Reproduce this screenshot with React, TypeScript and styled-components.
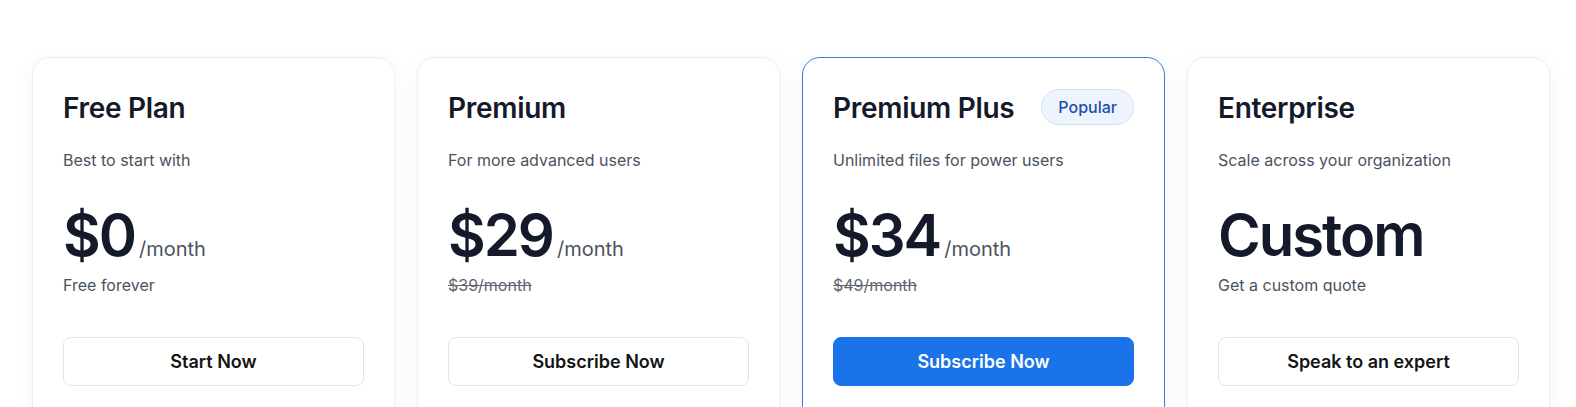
import React from 'react';
import styled, { createGlobalStyle } from 'styled-components';

type Plan = {
   name: string;
   tagline: string;
   price: string;
   period?: string;
   oldPrice?: string;
   note?: string;
   cta: string;
   featured?: boolean;
   badge?: string;
};

const plans: Plan[] = [
   { name: 'Free Plan', tagline: 'Best to start with', price: '$0', period: '/month', note: 'Free forever', cta: 'Start Now' },
   { name: 'Premium', tagline: 'For more advanced users', price: '$29', period: '/month', oldPrice: '$39/month', cta: 'Subscribe Now' },
   {
      name: 'Premium Plus',
      tagline: 'Unlimited files for power users',
      price: '$34',
      period: '/month',
      oldPrice: '$49/month',
      cta: 'Subscribe Now',
      featured: true,
      badge: 'Popular'
   },
   { name: 'Enterprise', tagline: 'Scale across your organization', price: 'Custom', note: 'Get a custom quote', cta: 'Speak to an expert' }
];

const GlobalStyle = createGlobalStyle`
   html, body {
      margin: 0;
      padding: 0;
      background: #ffffff;
      overflow: hidden;
      font-family: Inter, "Noto Sans", sans-serif;
      -webkit-font-smoothing: antialiased;
   }
`;

const App: React.FC = (): JSX.Element => {
   return (
      <>
         <GlobalStyle />
         <Page>
            <CardGrid>
               {plans.map((plan, i) => (
                  <Card key={i} featured={plan.featured}>
                     <TitleRow>
                        <PlanName>{plan.name}</PlanName>
                        {plan.badge && <Badge>{plan.badge}</Badge>}
                     </TitleRow>
                     <Tagline>{plan.tagline}</Tagline>
                     <PriceRow>
                        <Price>{plan.price}</Price>
                        {plan.period && <Period>{plan.period}</Period>}
                     </PriceRow>
                     {plan.oldPrice ? <OldPrice>{plan.oldPrice}</OldPrice> : <Note>{plan.note}</Note>}
                     <ActionButton primary={plan.featured}>{plan.cta}</ActionButton>
                  </Card>
               ))}
            </CardGrid>
         </Page>
      </>
   );
};

const Page = styled.div`
   padding: 57px 0 0 32px;
   height: 407px;
   box-sizing: border-box;
   overflow: hidden;
`;

const CardGrid = styled.div`
   display: grid;
   grid-template-columns: repeat(4, 363px);
   gap: 22px;
`;

const Card = styled.div<{ featured?: boolean }>`
   box-sizing: border-box;
   display: flex;
   flex-direction: column;
   padding: 32px 30px 40px;
   border-radius: 18px;
   background: #ffffff;
   border: ${({ featured }) => (featured ? '1.5px solid #3b7ad9' : '1px solid #efefef')};
   box-shadow: 0 4px 22px rgba(0, 0, 0, 0.045);
`;

const TitleRow = styled.div`
   display: flex;
   align-items: center;
   justify-content: space-between;
   height: 36px;
`;

const PlanName = styled.h3`
   margin: 0;
   font-size: 28px;
   line-height: 36px;
   font-weight: 600;
   letter-spacing: -0.3px;
   color: #141a29;
`;

const Badge = styled.span`
   display: inline-flex;
   align-items: center;
   box-sizing: border-box;
   height: 36px;
   margin-top: -2px;
   padding: 0 16px;
   border-radius: 18px;
   background: #eef4fd;
   border: 1px solid #d3e0f3;
   color: #1f4fae;
   font-size: 16px;
   font-weight: 500;
`;

const Tagline = styled.p`
   margin: 22px 0 0;
   font-size: 16px;
   line-height: 24px;
   color: #4b5260;
`;

const PriceRow = styled.div`
   display: flex;
   align-items: baseline;
   gap: 4px;
   margin-top: 31px;
   height: 64px;
`;

const Price = styled.span`
   font-size: 58px;
   line-height: 64px;
   font-weight: 600;
   letter-spacing: -2px;
   color: #141a29;
`;

const Period = styled.span`
   font-size: 20px;
   color: #4b5260;
`;

const Note = styled.p`
   margin: 6px 0 0;
   font-size: 16px;
   line-height: 24px;
   color: #4b5260;
`;

const OldPrice = styled(Note)`
   color: #5f6570;
   text-decoration: line-through;
`;

const ActionButton = styled.button.attrs({ type: 'button' })<{ primary?: boolean }>`
   margin-top: 40px;
   height: 49px;
   width: 100%;
   border-radius: 8px;
   font-family: inherit;
   font-size: 18px;
   font-weight: 600;
   cursor: pointer;
   background: ${({ primary }) => (primary ? '#1a73e8' : '#ffffff')};
   color: ${({ primary }) => (primary ? '#ffffff' : '#141414')};
   border: ${({ primary }) => (primary ? '1px solid #1a73e8' : '1px solid #e3e5e8')};
`;

export default App;
